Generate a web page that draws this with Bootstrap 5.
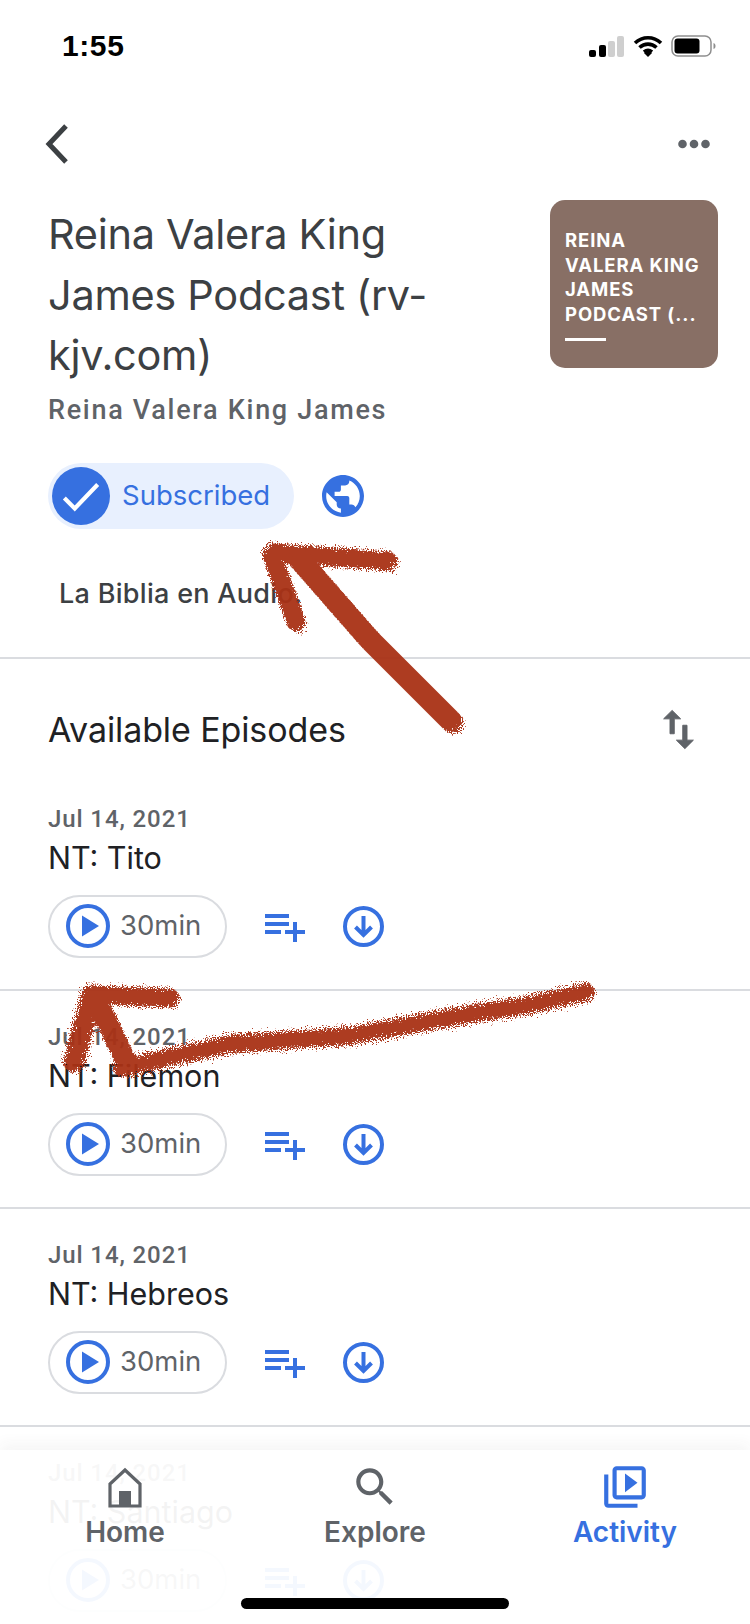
<!DOCTYPE html>
<html lang="en">
<head>
<meta charset="utf-8">
<title>Reina Valera King James Podcast</title>
<link href="https://cdn.jsdelivr.net/npm/bootstrap@5.3.0/dist/css/bootstrap.min.css" rel="stylesheet">
<style>
html,body{margin:0;background:#fff}
.phone{width:750px;height:1624px;position:relative;overflow:hidden;background:#fff;font-family:Roboto,"Noto Sans",sans-serif;color:#202124}
.status-row{height:92px;padding:0 34px 0 62px}
.clock{font:700 30px/1 "Liberation Sans",sans-serif;color:#000;margin-top:-1px;letter-spacing:.6px}
.nav-row{height:104px;padding:0 40px 0 45px}
.head-row{padding:4px 32px 0 48px}
.pod-title{font-family:Inter,sans-serif;font-size:41.500px;line-height:60.5px;font-weight:400;color:#3c4043;margin:4px 0 0;width:440px;letter-spacing:-.3px}
.pod-author{font-size:27px;line-height:36px;font-weight:500;color:#5f6368;letter-spacing:1.700px;margin-top:6px;white-space:nowrap}
.art{width:168px;height:168px;background:#886f65;border-radius:15px;color:#fff;padding:28px 0 0 15px;flex:none;font:700 18.5px/24.6px Inter,"Liberation Sans",sans-serif;letter-spacing:.9px}
.art-line{width:41px;height:3px;background:#fff;margin-top:12px}
.sub-row{padding-left:48px;margin-top:35px;gap:28px}
.sub-pill{width:246px;height:66px;border-radius:33px;background:#e8f0fe;padding-left:4px;gap:12px;color:#3670e0;font-family:Inter,sans-serif;font-size:27.500px}
.sub-disc{width:58px;height:58px;border-radius:50%;background:#3670e0}
.pod-desc{font-family:Inter,sans-serif;font-size:27px;line-height:36px;font-weight:500;color:#3c4043;padding-left:59px;margin-top:47px;letter-spacing:.3px}
.rule-top{border-top:2px solid #dadce0;margin-top:45px}
.avail{height:114px;padding:28px 46px 0 48px}
.avail-title{font-family:Inter,sans-serif;font-size:34px;line-height:42px;color:#202124;letter-spacing:-.1px}
.ep{height:218px;padding:30px 0 0 48px;border-bottom:2px solid #dadce0}
.ep-date{font-size:24px;line-height:32px;font-weight:500;color:#5f6368;letter-spacing:.9px}
.ep-name{font-family:Inter,sans-serif;font-size:30.500px;line-height:46px;color:#202124}
.ep-actions{margin-top:14px;gap:34px}
.play-pill{width:179px;height:63px;border:2px solid #dadce0;border-radius:32px;padding-left:16px;gap:10px;font-family:Inter,sans-serif;font-size:27.500px;color:#5f6368}
.tabbar{position:absolute;left:0;right:0;bottom:0;height:174px;background:rgba(255,255,255,.95);box-shadow:0 -6px 14px rgba(60,64,67,.05)}
.tab-item{width:250px;padding-top:12px;font-family:Inter,sans-serif;font-size:28px;line-height:36px;font-weight:600;color:#5f6368}
.tab-item svg{display:block}
.tab-label{margin-top:2px}
.tab-on{color:#3670e0}
.home-bar{position:absolute;left:241px;top:148px;width:268px;height:11px;border-radius:6px;background:#000}
.scribble{position:absolute;left:0;top:0;pointer-events:none}
.ic-blue{fill:#3670e0}
.ic-grey{fill:#5f6368;stroke:#5f6368;stroke-width:.45}
</style>
</head>
<body>
<div class="phone">
  <svg width="0" height="0" class="d-block">
    <defs>
      <symbol id="i-play" viewBox="0 0 44 44"><circle cx="22" cy="22" r="20" fill="none" stroke="#3670e0" stroke-width="4"/><path d="M16 11.500 33 22 16 32.500z" fill="#3670e0"/></symbol>
      <symbol id="i-queue" viewBox="0 0 24 24"><path d="M14 10H2v2h12v-2zm0-4H2v2h12V6zm4 8v-4h-2v4h-4v2h4v4h2v-4h4v-2h-4zM2 16h8v-2H2v2z" fill="#3670e0"/></symbol>
      <symbol id="i-down" viewBox="0 0 41 41"><circle cx="20.500" cy="20.500" r="18.500" fill="none" stroke="#3670e0" stroke-width="4"/><path d="M20.500 10v19M12.500 21l8 8 8-8" fill="none" stroke="#3670e0" stroke-width="4"/></symbol>
      <filter id="rough" x="-5%" y="-5%" width="110%" height="110%"><feTurbulence type="fractalNoise" baseFrequency=".8" numOctaves="2" seed="4"/><feDisplacementMap in="SourceGraphic" scale="16"/><feGaussianBlur stdDeviation=".6"/></filter>
    </defs>
  </svg>

  <div class="status-row d-flex align-items-center justify-content-between">
    <div class="clock">1:55</div>
    <div class="d-flex align-items-center gap-2">
      <svg width="36" height="21" viewBox="0 0 36 21"><rect x="0" y="14" width="7" height="7" rx="2" fill="#000"/><rect x="10" y="9" width="7" height="12" rx="2" fill="#000"/><rect x="19" y="5" width="7" height="16" rx="2" fill="#cfcfcf"/><rect x="28" y="0" width="7" height="21" rx="2" fill="#cfcfcf"/></svg>
      <svg width="30" height="22" viewBox="0 0 30 22"><path d="M2 8c7.500-7 18.500-7 26 0M6.500 12.500c5-4.500 12-4.500 17 0M11 17c2.500-2 5.500-2 8 0" fill="none" stroke="#000" stroke-width="3.600"/><path d="M15 22l-4-4 4-2 4 2z" fill="#000"/></svg>
      <svg width="45" height="22" viewBox="0 0 45 22"><rect x="1" y="1" width="39" height="20" rx="6" fill="none" stroke="#8e8e8e" stroke-width="1.500"/><rect x="3.500" y="3.500" width="25" height="15" rx="3" fill="#000"/><path d="M42.500 8v6c1.500-.5 2-1.500 2-3s-.5-2.500-2-3z" fill="#8e8e8e"/></svg>
    </div>
  </div>

  <div class="nav-row d-flex align-items-center justify-content-between">
    <svg width="24" height="42" viewBox="0 0 24 42"><path d="M21 3 4 21l17 18" fill="none" stroke="#3c4043" stroke-width="5"/></svg>
    <svg width="32" height="10" viewBox="0 0 32 10"><circle cx="4.500" cy="5" r="4.300" fill="#5f6368"/><circle cx="16" cy="5" r="4.300" fill="#5f6368"/><circle cx="27.500" cy="5" r="4.300" fill="#5f6368"/></svg>
  </div>

  <div class="head-row d-flex justify-content-between align-items-start">
    <div>
      <h1 class="pod-title">Reina Valera King James Podcast (rv-kjv.com)</h1>
      <div class="pod-author">Reina Valera King James</div>
    </div>
    <div class="art">REINA<br>VALERA KING<br>JAMES<br>PODCAST (...<div class="art-line"></div></div>
  </div>

  <div class="sub-row d-flex align-items-center">
    <div class="sub-pill d-flex align-items-center">
      <div class="sub-disc d-flex align-items-center justify-content-center">
        <svg width="50" height="50" viewBox="0 0 24 24"><path d="M4 13l5 5L20 6.500" fill="none" stroke="#fff" stroke-width="2"/></svg>
      </div>
      <span>Subscribed</span>
    </div>
    <svg width="42" height="42" viewBox="2 2 20 20"><path class="ic-blue" d="M12 2C6.480 2 2 6.480 2 12s4.480 10 10 10 10-4.480 10-10S17.520 2 12 2zm-1 17.930c-3.950-.490-7-3.850-7-7.930 0-.620.080-1.210.210-1.790L9 15v1c0 1.100.9 2 2 2v1.930zm6.900-2.540c-.260-.810-1-1.390-1.900-1.390h-1v-3c0-.550-.450-1-1-1H8v-2h2c.550 0 1-.450 1-1V7h2c1.100 0 2-.9 2-2v-.410c2.930 1.190 5 4.060 5 7.410 0 2.080-.8 3.970-2.100 5.390z"/></svg>
  </div>

  <div class="pod-desc">La Biblia en Audio.</div>
  <div class="rule-top"></div>

  <div class="avail d-flex align-items-center justify-content-between">
    <div class="avail-title">Available Episodes</div>
    <svg width="51" height="51" viewBox="0 0 24 24"><path class="ic-grey" d="M16 17.010V10h-2v7.010h-3L15 21l4-3.990h-3zM9 3 5 6.990h3V14h2V6.990h3L9 3z"/></svg>
  </div>

  <div class="ep">
    <div class="ep-date">Jul 14, 2021</div>
    <div class="ep-name">NT: Tito</div>
    <div class="ep-actions d-flex align-items-center">
      <div class="play-pill d-flex align-items-center"><svg width="44" height="44"><use href="#i-play"/></svg><span>30min</span></div>
      <svg width="48" height="48"><use href="#i-queue"/></svg>
      <svg width="41" height="41"><use href="#i-down"/></svg>
    </div>
  </div>
  <div class="ep">
    <div class="ep-date">Jul 14, 2021</div>
    <div class="ep-name">NT: Filemon</div>
    <div class="ep-actions d-flex align-items-center">
      <div class="play-pill d-flex align-items-center"><svg width="44" height="44"><use href="#i-play"/></svg><span>30min</span></div>
      <svg width="48" height="48"><use href="#i-queue"/></svg>
      <svg width="41" height="41"><use href="#i-down"/></svg>
    </div>
  </div>
  <div class="ep">
    <div class="ep-date">Jul 14, 2021</div>
    <div class="ep-name">NT: Hebreos</div>
    <div class="ep-actions d-flex align-items-center">
      <div class="play-pill d-flex align-items-center"><svg width="44" height="44"><use href="#i-play"/></svg><span>30min</span></div>
      <svg width="48" height="48"><use href="#i-queue"/></svg>
      <svg width="41" height="41"><use href="#i-down"/></svg>
    </div>
  </div>
  <div class="ep">
    <div class="ep-date">Jul 14, 2021</div>
    <div class="ep-name">NT: Santiago</div>
    <div class="ep-actions d-flex align-items-center">
      <div class="play-pill d-flex align-items-center"><svg width="44" height="44"><use href="#i-play"/></svg><span>30min</span></div>
      <svg width="48" height="48"><use href="#i-queue"/></svg>
      <svg width="41" height="41"><use href="#i-down"/></svg>
    </div>
  </div>

  <svg class="scribble" width="750" height="1624" viewBox="0 0 750 1624">
    <g fill="none" stroke="#a93218" stroke-linecap="round" stroke-linejoin="round" filter="url(#rough)" opacity=".95">
      <path stroke-width="19" d="M274 553 388 561"/>
      <path stroke-width="19" d="M272 555 296 622"/>
      <path stroke-width="22" d="M300 560 370 640 452 722"/>
      <path stroke-width="19" d="M95 995 170 998"/>
      <path stroke-width="21" d="M92 995 74 1062"/>
      <path stroke-width="21" d="M96 998 128 1066"/>
      <path stroke-width="18" d="M122 1068 230 1044 350 1036 470 1014 530 1005 586 992"/>
    </g>
  </svg>

  <nav class="tabbar d-flex">
    <div class="tab-item d-flex flex-column align-items-center">
      <svg width="50" height="50" viewBox="0 0 50 50"><path d="M25 8 40 22v22H10V22z" fill="none" stroke="#5f6368" stroke-width="3.200"/><rect x="19" y="29" width="12" height="15" fill="#5f6368"/></svg>
      <span class="tab-label">Home</span>
    </div>
    <div class="tab-item d-flex flex-column align-items-center">
      <svg width="50" height="50" viewBox="0 0 24 24"><path fill="#5f6368" d="M15.500 14h-.79l-.28-.27C15.410 12.590 16 11.110 16 9.500 16 5.910 13.090 3 9.500 3S3 5.910 3 9.500 5.910 16 9.500 16c1.610 0 3.090-.59 4.230-1.570l.27.28v.79l5 4.990L20.490 19l-4.990-5zm-6 0C7.010 14 5 11.990 5 9.500S7.010 5 9.500 5 14 7.010 14 9.500 11.990 14 9.500 14z"/></svg>
      <span class="tab-label">Explore</span>
    </div>
    <div class="tab-item tab-on d-flex flex-column align-items-center">
      <svg width="50" height="50" viewBox="0 0 24 24"><path class="ic-blue" d="M4 6H2v14c0 1.100.9 2 2 2h14v-2H4V6zm16-4H8c-1.100 0-2 .9-2 2v12c0 1.100.9 2 2 2h12c1.100 0 2-.9 2-2V4c0-1.100-.9-2-2-2zm0 14H8V4h12v12zM12 5.500v9l6-4.500z"/></svg>
      <span class="tab-label">Activity</span>
    </div>
    <div class="home-bar"></div>
  </nav>
</div>
<script src="https://cdn.jsdelivr.net/npm/bootstrap@5.3.0/dist/js/bootstrap.bundle.min.js"></script>
</body>
</html>
